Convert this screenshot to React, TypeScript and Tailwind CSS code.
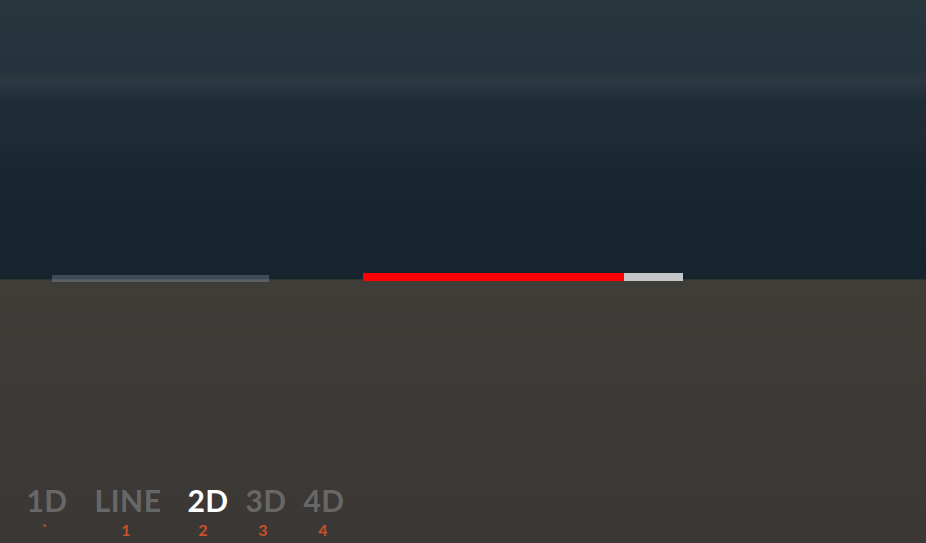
import React from "react";

const items = [
  { label: "1D", key: "`", w: "w-[38px]", ml: "ml-0", nx: "mr-[4px]", active: false },
  { label: "LINE", key: "1", w: "w-[66px]", ml: "ml-[29px]", nx: "mr-[4px]", active: false },
  { label: "2D", key: "2", w: "w-[38px]", ml: "ml-[28px]", nx: "mr-[10px]", active: true },
  { label: "3D", key: "3", w: "w-[38px]", ml: "ml-[20px]", nx: "mr-[6px]", active: false },
  { label: "4D", key: "4", w: "w-[38px]", ml: "ml-[20px]", nx: "mr-[2px]", active: false },
];

export default function App() {
  return (
    <div
      className="relative flex h-[543px] w-[926px] flex-col overflow-hidden"
      style={{ fontFamily: "Lato, 'Open Sans', sans-serif" }}
    >
      <div className="h-[279px] w-full bg-[linear-gradient(180deg,#28363e_0px,#25343c_70px,#2c3841_82px,#283540_88px,#1f2d36_100px,#1e2b35_125px,#1f2c37_132px,#18262f_175px,#16242d_279px)]" />
      <div className="h-px w-full bg-[#2e3633]" />
      <div className="flex flex-1 flex-col justify-end bg-[linear-gradient(180deg,#3e3d38_0%,#3c3a36_60%,#3b3735_100%)] pb-[5px] pl-[28px]">
        <div className="flex items-start">
          {items.map((it) => (
            <div key={it.label} className={`flex flex-col items-center ${it.w} ${it.ml}`}>
              <div
                className={`whitespace-nowrap text-[30px] font-bold leading-[29px] tracking-[0.5px] ${
                  it.active ? "text-white" : "text-[#676767]"
                }`}
              >
                {it.label}
              </div>
              <div
                className={`mt-[7px] text-[16px] font-bold leading-[16px] text-[#c9502a] ${it.nx}`}
              >
                {it.key}
              </div>
            </div>
          ))}
        </div>
      </div>

      <div className="absolute left-[52px] top-[275px] h-[7px] w-[217px] bg-[rgba(190,210,225,0.24)]" />
      <div className="absolute left-[363px] top-[273px] flex h-[8px] w-[320px]">
        <div className="h-full w-[261px] bg-[#ff0000]" />
        <div className="h-full flex-1 bg-[#c4c7ca]" />
      </div>
    </div>
  );
}
